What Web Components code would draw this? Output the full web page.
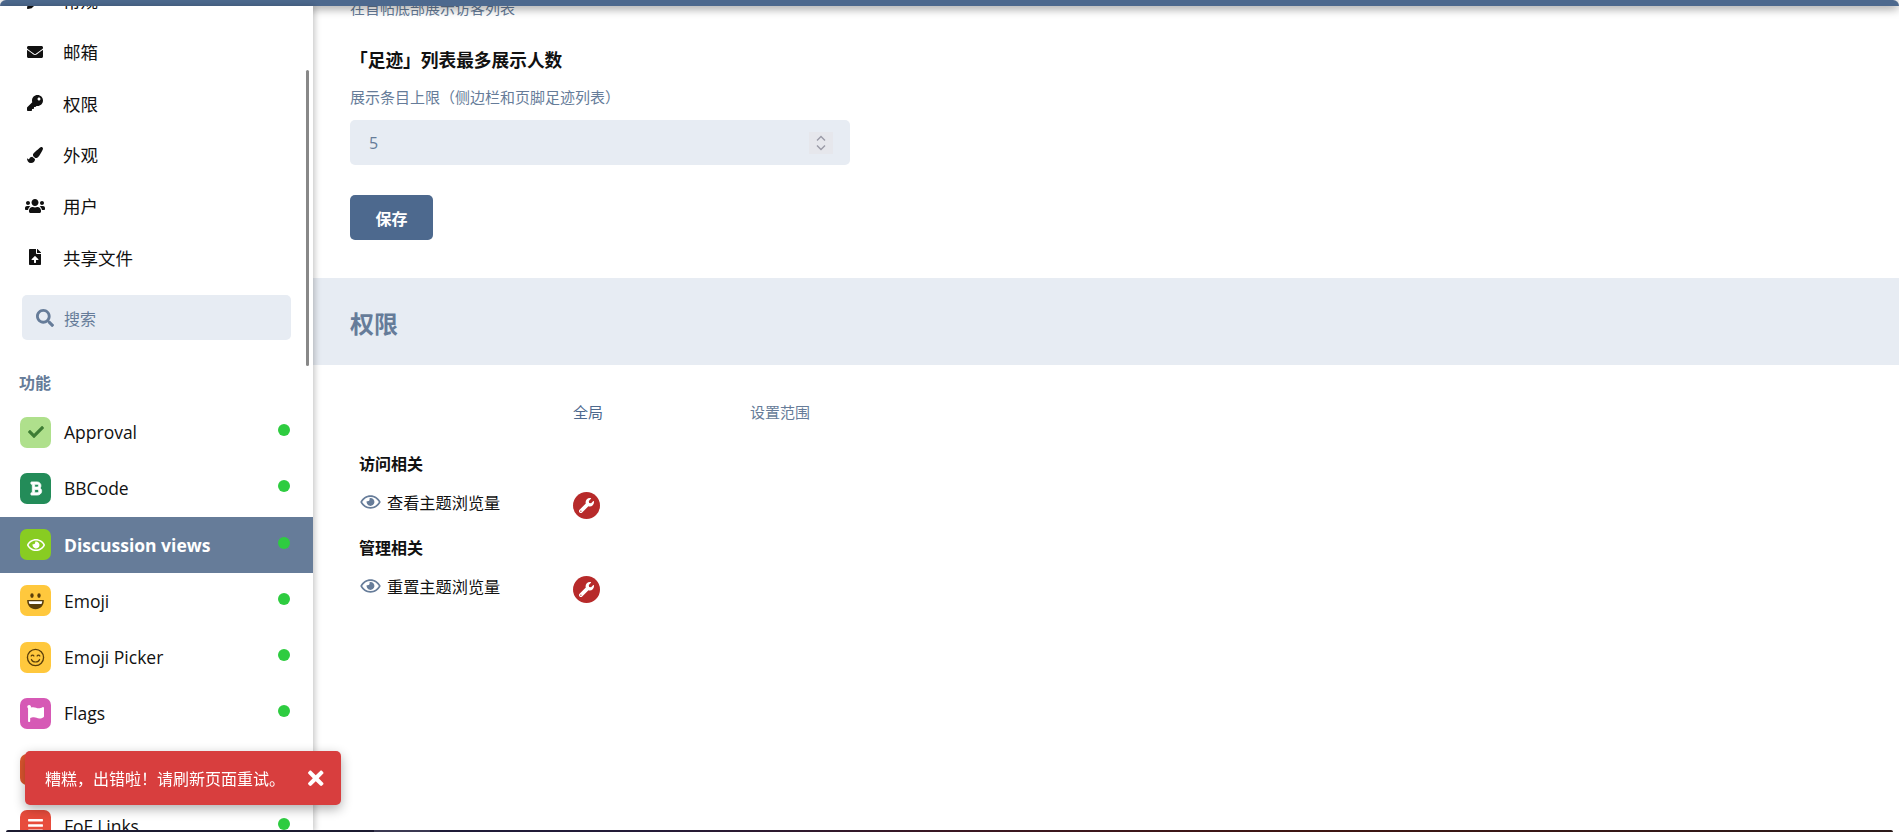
<!DOCTYPE html>
<html lang="zh-CN">
<head>
<meta charset="utf-8">
<title>Discussion views</title>
<style>
html,body{margin:0;height:100%;overflow:hidden;background:#fff}
body{font-family:"Open Sans","Noto Sans CJK SC",sans-serif;color:#111}
</style>
</head>
<body>
<admin-shell>
  <top-bar slot="top"></top-bar>
  <side-nav slot="side">
    <nav-link icon="pencil">常规</nav-link>
    <nav-link icon="envelope">邮箱</nav-link>
    <nav-link icon="key">权限</nav-link>
    <nav-link icon="brush">外观</nav-link>
    <nav-link icon="users">用户</nav-link>
    <nav-link icon="file">共享文件</nav-link>
    <search-box>搜索</search-box>
    <nav-heading>功能</nav-heading>
    <ext-item icon="check" bg="#afe08c" fg="#3e7d34">Approval</ext-item>
    <ext-item icon="bold" bg="#238c59" fg="#fff">BBCode</ext-item>
    <ext-item icon="eye" bg="#88cc22" fg="#fff" active>Discussion views</ext-item>
    <ext-item icon="grin" bg="#ffc83d" fg="#5b3f0a">Emoji</ext-item>
    <ext-item icon="smile" bg="#ffc83d" fg="#5b3f0a">Emoji Picker</ext-item>
    <ext-item icon="flag" bg="#d659b5" fg="#fff">Flags</ext-item>
    <ext-item icon="bars" bg="#e0572f" fg="#fff"></ext-item>
    <ext-item icon="bars" bg="#e74c3c" fg="#fff">FoF Links</ext-item>
  </side-nav>
  <main-pane slot="main">
    <setting-field>
      <p-hint class="first">在首帖底部展示访客列表</p-hint>
      <field-title>「足迹」列表最多展示人数</field-title>
      <p-hint>展示条目上限（侧边栏和页脚足迹列表）</p-hint>
      <number-box>5</number-box>
      <save-button>保存</save-button>
    </setting-field>
    <section-band>权限</section-band>
    <perm-grid>
      <perm-head></perm-head>
      <perm-section>访问相关</perm-section>
      <perm-row icon="eye">查看主题浏览量</perm-row>
      <perm-section>管理相关</perm-section>
      <perm-row icon="eye">重置主题浏览量</perm-row>
    </perm-grid>
  </main-pane>
</admin-shell>
<toast-alert>糟糕，出错啦！请刷新页面重试。</toast-alert>
<bottom-strip></bottom-strip>

<script>
const ICONS = {
  pencil:['0 0 512 512','<path d="M497.9 142.1l-46.1 46.1c-4.7 4.7-12.3 4.7-17 0l-111-111c-4.7-4.7-4.7-12.3 0-17l46.1-46.1c18.7-18.7 49.1-18.7 67.9 0l60.1 60.1c18.8 18.7 18.8 49.1 0 67.9zM284.2 99.8L21.6 362.4.4 483.9c-2.9 16.4 11.4 30.6 27.8 27.8l121.5-21.3 262.6-262.6c4.7-4.7 4.7-12.3 0-17l-111-111c-4.8-4.7-12.4-4.7-17.1 0z"/>'],
  envelope:['0 0 512 512','<path d="M502.3 190.8c3.9-3.1 9.7-.2 9.7 4.7V400c0 26.5-21.5 48-48 48H48c-26.5 0-48-21.5-48-48V195.6c0-5 5.7-7.8 9.7-4.7 22.4 17.4 52.1 39.5 154.1 113.6 21.1 15.4 56.7 47.8 92.2 47.6 35.7.3 72-32.8 92.3-47.6 102-74.1 131.6-96.3 154-113.7zM256 320c23.2.4 56.6-29.2 73.4-41.4 132.7-96.3 142.8-104.7 173.4-128.7 5.8-4.5 9.2-11.5 9.2-18.9v-19c0-26.5-21.5-48-48-48H48C21.5 64 0 85.5 0 112v19c0 7.4 3.4 14.3 9.2 18.9 30.6 23.9 40.7 32.4 173.4 128.7 16.8 12.2 50.2 41.8 73.4 41.4z"/>'],
  key:['0 0 512 512','<path d="M512 176.001C512 273.203 433.202 352 336 352c-11.22 0-22.19-1.062-32.827-3.069l-24.012 27.014A23.999 23.999 0 0 1 261.223 384H224v40c0 13.255-10.745 24-24 24h-40v40c0 13.255-10.745 24-24 24H24c-13.255 0-24-10.745-24-24v-78.059c0-6.365 2.529-12.47 7.029-16.971l161.802-161.802C163.108 213.814 160 195.271 160 176 160 78.798 238.797.001 335.999 0 433.488-.001 512 78.511 512 176.001zM336 128c0 26.51 21.49 48 48 48s48-21.49 48-48-21.49-48-48-48-48 21.49-48 48z"/>'],
  brush:['0 0 512 512','<path d="M167.02 309.34c-40.12 2.58-76.53 17.86-97.19 72.3-2.35 6.21-8 9.98-14.59 9.98-11.11 0-45.46-27.67-55.25-34.35C0 439.62 37.93 512 128 512c75.86 0 128-43.77 128-120.19 0-3.11-.65-6.08-.97-9.13l-88.01-73.34zM457.89 0c-15.16 0-29.37 6.71-40.21 16.45C213.27 199.05 192 203.34 192 257.09c0 13.7 3.25 26.76 8.73 38.7l63.82 53.18c7.21 1.8 14.64 3.03 22.39 3.03 62.11 0 98.11-45.47 211.16-256.46 7.38-14.35 13.9-29.85 13.9-45.99C512 20.64 486 0 457.89 0z"/>'],
  users:['0 0 640 512','<path d="M96 224c35.3 0 64-28.7 64-64s-28.7-64-64-64-64 28.7-64 64 28.7 64 64 64zm448 0c35.3 0 64-28.7 64-64s-28.7-64-64-64-64 28.7-64 64 28.7 64 64 64zm32 32h-64c-17.6 0-33.5 7.1-45.1 18.6 40.3 22.1 68.9 62 75.1 109.4h66c17.7 0 32-14.3 32-32v-32c0-35.3-28.7-64-64-64zm-256 0c61.9 0 112-50.1 112-112S381.9 32 320 32 208 82.1 208 144s50.1 112 112 112zm76.8 32h-8.3c-20.8 10-43.9 16-68.5 16s-47.6-6-68.5-16h-8.3C179.6 288 128 339.6 128 403.2V432c0 26.5 21.5 48 48 48h288c26.5 0 48-21.5 48-48v-28.8c0-63.6-51.6-115.2-115.2-115.2zm-223.7-13.4C161.5 263.1 145.6 256 128 256H64c-35.3 0-64 28.7-64 64v32c0 17.7 14.3 32 32 32h65.9c6.3-47.4 34.9-87.3 75.2-109.4z"/>'],
  file:['0 0 384 512','<path d="M224 136V0H24C10.7 0 0 10.7 0 24v464c0 13.3 10.7 24 24 24h336c13.3 0 24-10.7 24-24V160H248c-13.2 0-24-10.8-24-24zm65.18 216.01H224v80c0 8.84-7.16 16-16 16h-32c-8.84 0-16-7.16-16-16v-80H94.82c-14.28 0-21.41-17.29-11.27-27.36l96.42-95.7c6.65-6.61 17.39-6.61 24.04 0l96.42 95.7c10.15 10.07 3.03 27.36-11.25 27.36zM377 105L279.1 7c-4.5-4.5-10.6-7-17-7H256v128h128v-6.1c0-6.3-2.5-12.4-7-16.9z"/>'],
  search:['0 0 512 512','<path d="M505 442.7L405.3 343c-4.5-4.5-10.6-7-17-7H372c27.6-35.3 44-79.7 44-128C416 93.1 322.9 0 208 0S0 93.1 0 208s93.1 208 208 208c48.3 0 92.7-16.4 128-44v16.3c0 6.4 2.5 12.5 7 17l99.7 99.7c9.4 9.4 24.6 9.4 33.9 0l28.3-28.3c9.4-9.4 9.4-24.6.1-34zM208 336c-70.7 0-128-57.2-128-128 0-70.7 57.2-128 128-128 70.7 0 128 57.2 128 128 0 70.7-57.2 128-128 128z"/>'],
  check:['0 0 512 512','<path d="M173.898 439.404l-166.4-166.4c-9.997-9.997-9.997-26.206 0-36.204l36.203-36.204c9.997-9.998 26.207-9.998 36.204 0L192 312.69 432.095 72.596c9.997-9.997 26.207-9.997 36.204 0l36.203 36.204c9.997 9.997 9.997 26.206 0 36.204l-294.4 294.401c-9.998 9.997-26.207 9.997-36.204-.001z"/>'],
  eye:['0 0 576 512','<path d="M288 144a110.94 110.94 0 0 0-31.24 5 55.4 55.4 0 0 1 7.24 27 56 56 0 0 1-56 56 55.4 55.4 0 0 1-27-7.24A111.71 111.71 0 1 0 288 144zm284.52 97.4C518.29 135.59 410.93 64 288 64S57.68 135.64 3.48 241.41a32.35 32.35 0 0 0 0 29.19C57.71 376.41 165.07 448 288 448s230.32-71.64 284.52-177.41a32.35 32.35 0 0 0 0-29.19zM288 400c-98.65 0-189.09-55-237.93-144C98.91 167 189.34 112 288 112s189.09 55 237.93 144C477.1 345 386.66 400 288 400z"/>'],
  wrench:['0 0 512 512','<path d="M507.73 109.1c-2.24-9.03-13.54-12.09-20.12-5.51l-74.36 74.36-67.88-11.31-11.31-67.88 74.36-74.36c6.62-6.62 3.43-17.9-5.66-20.16-47.38-11.74-99.55.91-136.58 37.93-39.64 39.64-50.55 97.1-34.05 147.2L18.74 402.76c-24.99 24.99-24.99 65.51 0 90.5 24.99 24.99 65.51 24.99 90.5 0l213.21-213.21c50.12 16.71 107.47 5.68 147.37-34.22 37.07-37.07 49.7-89.32 37.91-136.73zM64 472c-13.25 0-24-10.75-24-24 0-13.26 10.75-24 24-24s24 10.74 24 24c0 13.25-10.75 24-24 24z"/>'],
  flag:['0 0 512 512','<path d="M349.565 98.783C295.978 98.783 251.721 64 184.348 64c-24.955 0-47.309 4.384-68.045 12.013a55.947 55.947 0 0 0 3.586-23.562C118.117 24.015 94.806 1.206 66.338.048 34.345-1.254 8 24.296 8 56c0 19.026 9.497 35.825 24 45.945V488c0 13.255 10.745 24 24 24h16c13.255 0 24-10.745 24-24v-94.4c28.311-12.064 63.582-22.122 114.435-22.122 53.588 0 97.844 34.783 165.217 34.783 48.169 0 86.667-16.294 122.505-40.858C506.84 359.452 512 349.571 512 339.045v-243.1c0-23.393-24.269-38.87-45.485-29.016-34.338 15.948-76.454 31.854-116.95 31.854z"/>'],
  bars:['0 0 448 512','<path d="M16 132h416c8.837 0 16-7.163 16-16V76c0-8.837-7.163-16-16-16H16C7.163 60 0 67.163 0 76v40c0 8.837 7.163 16 16 16zm0 160h416c8.837 0 16-7.163 16-16v-40c0-8.837-7.163-16-16-16H16c-8.837 0-16 7.163-16 16v40c0 8.837 7.163 16 16 16zm0 160h416c8.837 0 16-7.163 16-16v-40c0-8.837-7.163-16-16-16H16c-8.837 0-16 7.163-16 16v40c0 8.837 7.163 16 16 16z"/>'],
  times:['0 0 352 512','<path d="M242.72 256l100.07-100.07c12.28-12.28 12.28-32.19 0-44.48l-22.24-22.24c-12.28-12.28-32.19-12.28-44.48 0L176 189.28 75.93 89.21c-12.28-12.28-32.19-12.28-44.48 0L9.21 111.45c-12.28 12.28-12.28 32.19 0 44.48L109.28 256 9.21 356.07c-12.28 12.28-12.28 32.19 0 44.48l22.24 22.24c12.28 12.28 32.2 12.28 44.48 0L176 322.72l100.07 100.07c12.28 12.28 32.2 12.28 44.48 0l22.24-22.24c12.28-12.28 12.28-32.19 0-44.48L242.72 256z"/>'],
  bold:['0 0 384 512','<path stroke="currentColor" stroke-width="26" d="M333.49 238a122 122 0 0 0 27-65.21C367.87 96.49 308 32 233.42 32H34a16 16 0 0 0-16 16v48a16 16 0 0 0 16 16h31.87v288H34a16 16 0 0 0-16 16v48a16 16 0 0 0 16 16h209.32c70.8 0 134.14-51.75 141-122.4 4.74-48.45-16.39-91.31-50.83-115.6zM145.66 112h87.76a48 48 0 0 1 0 96h-87.76zm87.76 288h-87.76V288h87.76a56 56 0 0 1 0 112z"/>'],
  grin:['0 0 24 24','<ellipse cx="8" cy="6.400" rx="1.900" ry="2.600"/><ellipse cx="16" cy="6.400" rx="1.900" ry="2.600"/><path d="M2.500 11.500h19c.3 6.200-4 10.500-9.500 10.500S2.200 17.700 2.500 11.500z"/><path fill="#fff" d="M4.300 12.800h15.400c-.1 1.300-.4 2.300-.9 3.200H5.200c-.5-.9-.8-1.900-.9-3.200z"/>'],
  smile:['0 0 24 24','<circle cx="12" cy="12" r="10.200" fill="none" stroke="currentColor" stroke-width="1.700"/><path d="M6.500 10.200c.7-1.700 2.800-1.700 3.500 0M14 10.200c.7-1.700 2.800-1.700 3.500 0M6.800 14.500c1.500 4.200 8.900 4.200 10.400 0" fill="none" stroke="currentColor" stroke-width="1.500" stroke-linecap="round"/>']
};

function def(name, css, html, init){
  customElements.define(name, class extends HTMLElement{
    constructor(){
      super();
      this.attachShadow({mode:'open'}).innerHTML = '<style>'+css+'</style>'+html;
    }
    connectedCallback(){ if(init) init(this); }
  });
}

function svg(name, w, h, color){
  const [vb, body] = ICONS[name];
  return `<svg xmlns="http://www.w3.org/2000/svg" viewBox="${vb}" width="${w}" height="${h}" fill="currentColor" style="color:${color||'inherit'};display:block">${body}</svg>`;
}

def('admin-shell',
 `:host{display:flex;flex-direction:column;height:832px;width:1899px;overflow:hidden}
  .body{flex:1;min-height:0;display:flex}
  ::slotted([slot=side]){flex:none}
  ::slotted([slot=main]){flex:1;min-width:0}`,
 `<slot name="top"></slot><div class="body"><slot name="side"></slot><slot name="main"></slot></div>`);

def('top-bar',
 `:host{display:block;height:6px;flex:none;background:#4d698e;border-radius:10px 10px 0 0;position:relative;z-index:1;box-shadow:0 2px 10px rgba(0,0,0,.5)}`,``);

def('side-nav',
 `:host{display:block;width:313px;background:#fff;position:relative;z-index:2;box-shadow:2px 0 6px rgba(0,0,0,.22);overflow:visible}
  .clip{height:100%;overflow:hidden;position:relative}
  .list{margin-top:-31px}
  .thumb{position:absolute;left:306px;top:64px;width:3px;height:296px;background:#888;border-radius:2px}`,
 `<div class="clip"><div class="list"><slot></slot></div><div class="thumb"></div></div>`);

def('nav-link',
 `:host{display:flex;align-items:center;height:51.300px;font-size:17.500px;color:#111}
  .i{width:36px;margin-left:27px;display:flex}
  .i.wide{margin-left:25px;width:38px}`,
 `<span class="i"></span><slot></slot>`,
 el=>{
   const n=el.getAttribute('icon'), i=el.shadowRoot.querySelector('.i');
   if(n==='users'){i.classList.add('wide');i.innerHTML=svg(n,20,16);}
   else if(n==='file'){i.innerHTML=svg(n,12,16);i.style.paddingLeft='2px';i.style.width='34px';}
   else i.innerHTML=svg(n,16,16);
 });

def('search-box',
 `:host{display:flex;align-items:center;height:45px;margin:12.500px 22px 0;background:#e7ecf3;border-radius:5px;color:#667c99;font-size:16px}
  .i{margin:0 10px 0 14px;display:flex}`,
 `<span class="i">${svg('search',18,18,'#667c99')}</span><slot></slot>`);

def('nav-heading',
 `:host{display:block;margin:31px 0 0 19px;height:32.800px;font-size:16px;line-height:24px;font-weight:700;color:#667c99}`,
 `<slot></slot>`);

def('ext-item',
 `:host{display:flex;align-items:center;height:56.250px;padding-left:20px;font-size:17.500px;color:#111;position:relative;box-sizing:border-box}
  :host([active]){background:#667c99;color:#fff;font-weight:700}
  .tile{width:31px;height:31px;border-radius:7px;display:flex;align-items:center;justify-content:center;margin-right:13px;flex:none}
  .dot{position:absolute;left:278px;top:50%;margin-top:-8px;width:12px;height:12px;border-radius:50%;background:#2ecc40}`,
 `<span class="tile"></span><slot></slot><span class="dot"></span>`,
 el=>{
   const n=el.getAttribute('icon'), t=el.shadowRoot.querySelector('.tile');
   t.style.background=el.getAttribute('bg');
   const s={check:[16,16],bold:[14,15],eye:[20,16],grin:[21,21],smile:[19,19],flag:[17,17],bars:[15,17]}[n];
   t.innerHTML=svg(n,s[0],s[1],el.getAttribute('fg'));
 });

def('main-pane',
 `:host{display:block;overflow:hidden;background:#fff;height:100%}`,`<slot></slot>`);

def('setting-field',
 `:host{display:block;padding-left:37px}`,`<slot></slot>`);

def('p-hint',
 `:host{display:block;font-size:15px;line-height:20px;color:#667c99}
  :host(.first){margin-top:-8px}`,`<slot></slot>`);

def('field-title',
 `:host{display:block;margin-top:30px;margin-bottom:15px;font-size:17.700px;line-height:24px;font-weight:700;color:#111}`,`<slot></slot>`);

def('number-box',
 `:host{display:flex;align-items:center;justify-content:space-between;box-sizing:border-box;width:500px;height:45px;margin-top:13px;padding:0 17px 0 19px;background:#e7ecf3;border-radius:5px;font-size:16px;color:#667c99}
  .spin{width:24px;height:22px;background:#e6e7ec;display:flex;align-items:center;justify-content:center}`,
 `<slot></slot><span class="spin"><svg width="12" height="18" viewBox="0 0 12 18" fill="none" stroke="#9a9aa6" stroke-width="1.400"><path d="M2 6.500l4-4 4 4M2 11.500l4 4 4-4"/></svg></span>`);

def('save-button',
 `:host{display:flex;align-items:center;justify-content:center;width:83px;height:45px;margin-top:30px;background:#4d698e;border-radius:5px;color:#fff;font-size:16px;font-weight:700}`,`<slot></slot>`);

def('section-band',
 `:host{display:block;box-sizing:border-box;height:87px;margin-top:38px;padding:31.300px 0 0 37px;background:#e7ecf3;color:#667c99;font-size:24px;line-height:30px;font-weight:700}`,`<slot></slot>`);

def('perm-grid',
 `:host{display:block;padding:37px 0 0 46px}`,`<slot></slot>`);

def('perm-head',
 `:host{display:grid;grid-template-columns:214px 177px auto;height:20px;font-size:15px;line-height:20px;margin-bottom:23.500px}
  .a{color:#4d698e}
  .b{color:#667c99}`,
 `<i></i><span class="a">全局</span><span class="b">设置范围</span>`);

def('perm-section',
 `:host{display:flex;align-items:center;height:35px;font-size:16px;font-weight:700;color:#111}`,`<slot></slot>`);

def('perm-row',
 `:host{display:grid;grid-template-columns:214px auto;height:49.200px;font-size:16.200px;color:#111}
  .l{display:flex;align-items:flex-start;padding-top:11.500px;line-height:22px}
  .e{margin:1px 6px 0 1px;display:flex}
  .w{width:27px;height:27px;margin-top:11px;border-radius:50%;background:#b72a2a;display:flex;align-items:center;justify-content:center}`,
 `<div class="l"><span class="e">${svg('eye',21,18,'#667c99')}</span><slot></slot></div><div class="w">${svg('wrench',15,15,'#fff')}</div>`);

def('toast-alert',
 `:host{position:fixed;left:25px;top:751px;z-index:5;box-sizing:border-box;width:316px;height:54px;padding-left:20px;display:flex;align-items:center;background:#d83e3e;border-radius:5px;color:#fff;font-size:16px;box-shadow:0 4px 12px rgba(0,0,0,.32)}
  .x{position:absolute;left:283px;top:16px;display:flex}`,
 `<slot></slot><span class="x">${svg('times',15.500,22.500,'#fff')}</span>`);

def('bottom-strip',
 `:host{position:fixed;left:6px;right:6px;bottom:0;height:2px;z-index:6;border-radius:2px 2px 0 0;
  background:linear-gradient(90deg,#1b1a30 0,#1b1a30 368px,#3b3952 368px,#3b3952 424px,#1e1b38 424px,#241b38 640px,#3a1722 950px,#3e1512 1300px,#2b1a1a 100%)}`,``);
</script>
</body>
</html>
